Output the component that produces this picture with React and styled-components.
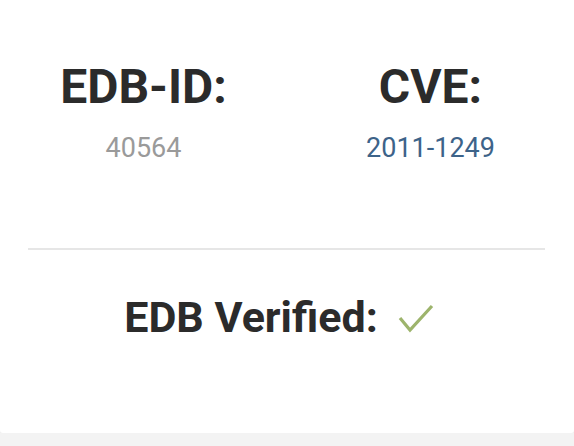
import React from "react";
import styled, { createGlobalStyle } from "styled-components";

const GlobalStyle = createGlobalStyle`
  html, body {
    margin: 0;
    padding: 0;
    background: #f3f3f3;
  }
  body {
    font-family: Roboto, "Liberation Sans", sans-serif;
  }
`;

export const Card = styled.div`
  width: 100%;
  height: 433px;
  background: #ffffff;
  border-radius: 0 0 3px 3px;
  box-shadow: 0 1px 4px rgba(0, 0, 0, 0.04);
  box-sizing: border-box;
  padding-top: 58px;
`;

export const Stats = styled.div`
  display: grid;
  grid-template-columns: 1fr 1fr;
`;

export const Stat = styled.div`
  text-align: center;
`;

export const Label = styled.h4`
  margin: 0;
  font-size: 48px;
  line-height: 57px;
  font-weight: 700;
  color: #2b2b2b;
`;

export const Value = styled.div`
  margin-top: 13px;
  font-size: 27px;
  line-height: 40px;
  color: ${(p) => (p.link ? "#3d6389" : "#9a9a9a")};
`;

export const Divider = styled.hr`
  margin: 80px 29px 0 28px;
  border: 0;
  border-top: 2px solid #e6e6e6;
`;

export const Verified = styled.div`
  margin-top: 41px;
  display: flex;
  align-items: center;
  justify-content: center;
  gap: 20px;
  padding-right: 16px;
`;

export const VerifiedLabel = styled.h4`
  margin: 0;
  font-size: 43px;
  line-height: 53px;
  font-weight: 700;
  color: #2b2b2b;
`;

const Check = () => (
  <svg width="36" height="30" viewBox="0 0 36 30" fill="none">
    <polyline
      points="2,15 12,27 34,3"
      stroke="#9db46c"
      strokeWidth="3.2"
      strokeLinecap="butt"
      strokeLinejoin="miter"
    />
  </svg>
);

const App = () => {
  return (
    <>
      <GlobalStyle />
      <Card>
        <Stats>
          <Stat>
            <Label>EDB-ID:</Label>
            <Value>40564</Value>
          </Stat>
          <Stat>
            <Label>CVE:</Label>
            <Value link>2011-1249</Value>
          </Stat>
        </Stats>
        <Divider />
        <Verified>
          <VerifiedLabel>EDB Verified:</VerifiedLabel>
          <Check />
        </Verified>
      </Card>
    </>
  );
};

export default App;
